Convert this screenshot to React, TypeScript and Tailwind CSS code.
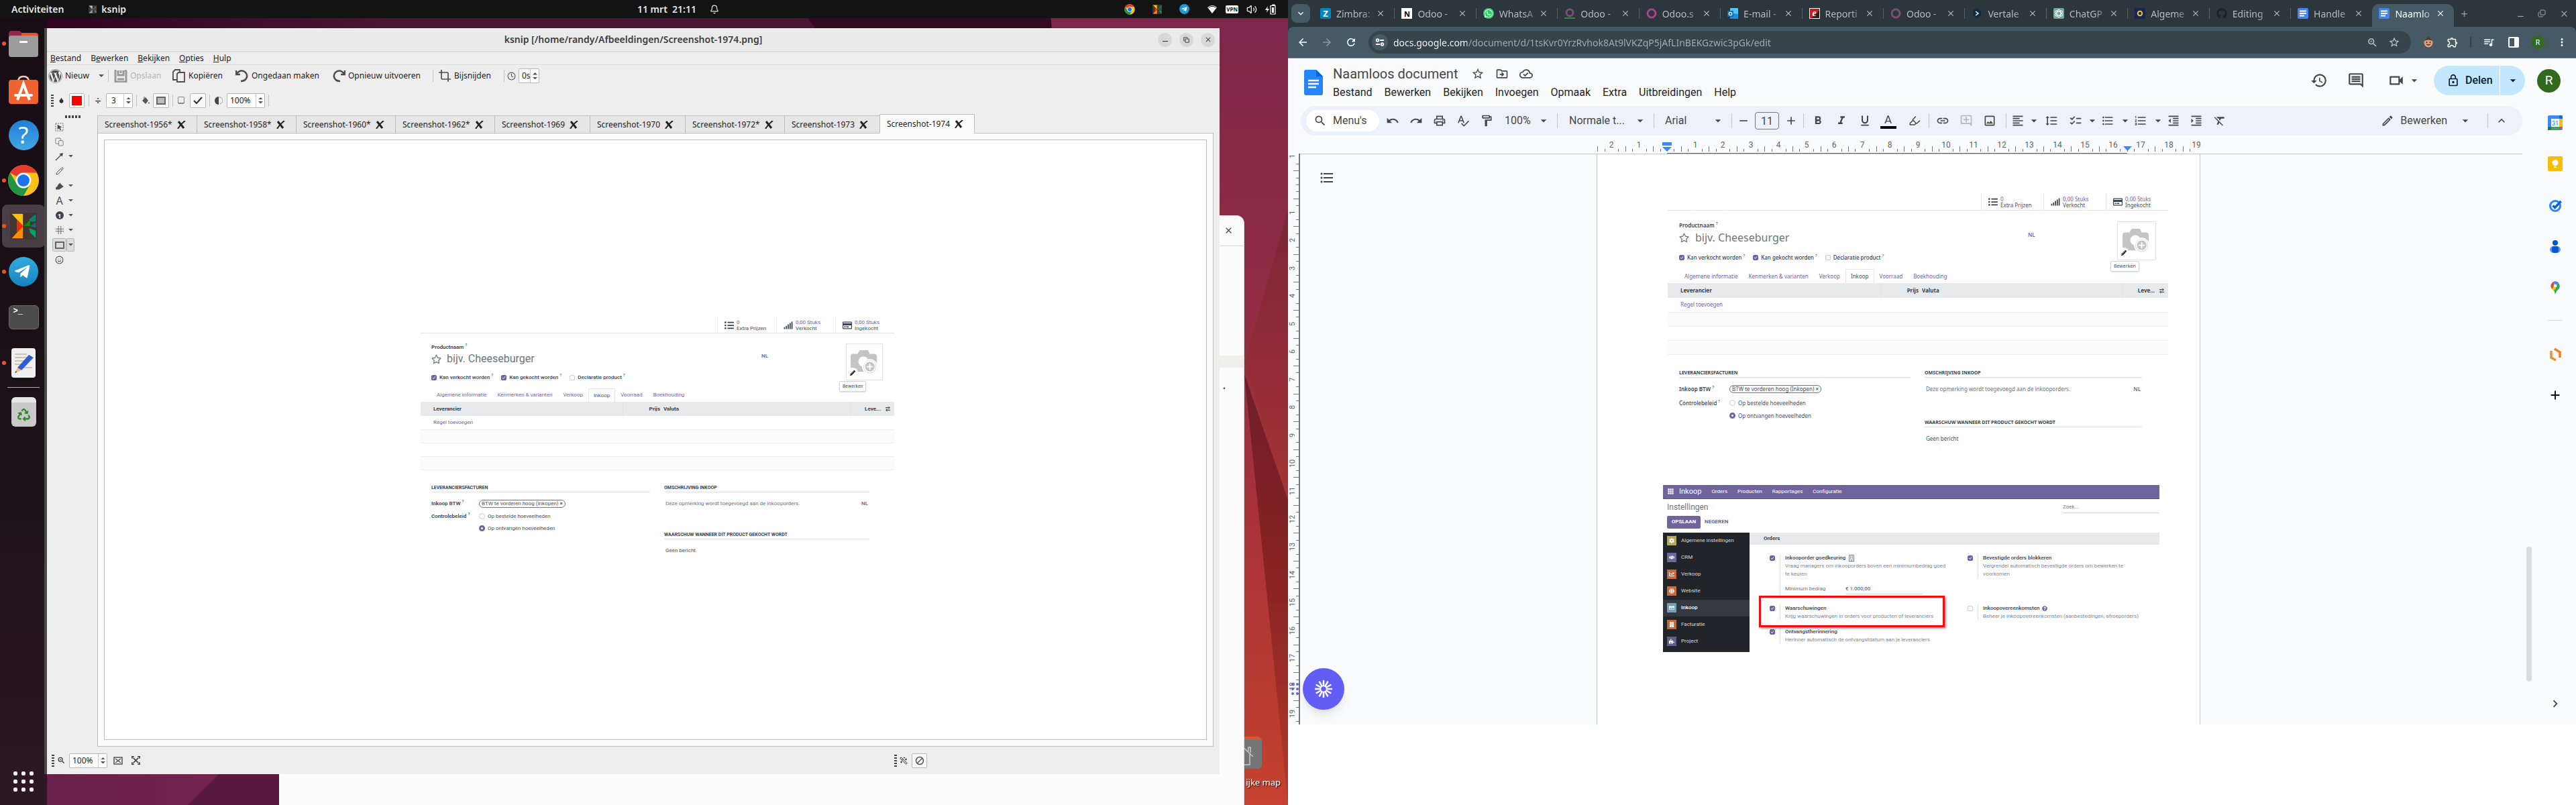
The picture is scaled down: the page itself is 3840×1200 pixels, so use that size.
import type { ReactNode } from "react";
import {
  MdAdd, MdArrowBack, MdArrowDropDown, MdArrowForward, MdChecklist, MdChevronRight, MdClose, MdExpandMore,
  MdFormatAlignLeft, MdFormatBold, MdFormatClear, MdFormatIndentDecrease, MdFormatIndentIncrease, MdFormatItalic,
  MdFormatLineSpacing, MdFormatListBulleted, MdFormatListNumbered, MdFormatUnderlined, MdHistory, MdKeyboardArrowUp,
  MdLink, MdMoreVert, MdOutlineAddComment, MdOutlineCloudDone, MdOutlineComment, MdOutlineDriveFileMove, MdOutlineEdit,
  MdOutlineExtension, MdOutlineFormatPaint, MdOutlineImage, MdOutlineLock, MdOutlinePrint, MdOutlineVideocam,
  MdQueueMusic, MdRedo, MdRefresh, MdRemove, MdSearch, MdSpellcheck, MdStarBorder, MdUndo, MdZoomIn,
} from "react-icons/md";
import {
  FaBuilding, FaChartLine, FaCog, FaGithub, FaGlobe, FaHandshake, FaListUl, FaPencilAlt, FaPuzzlePiece,
  FaQuestionCircle, FaRecycle, FaRegBuilding, FaRegCreditCard, FaRegStar, FaSignal, FaTelegramPlane, FaWhatsapp, FaWordpress,
} from "react-icons/fa";
import {
  Bell, Clock, Copy, Crop, Droplet, Highlighter, Pencil, Smile, Volume2, WandSparkles,
} from "lucide-react";

/* ---------- shared pieces ---------- */

function ChromeLogo({ className }: { className: string }) {
  return (
    <svg viewBox="0 0 48 48" className={className}>
      <circle cx="24" cy="24" r="23" fill="#fbc116" />
      <path d="M24 24 L4.1 12.5 A23 23 0 0 1 43.9 12.5 L24 12.5Z" fill="#e33b2e" />
      <path d="M4.1 12.5 A23 23 0 0 0 24 47 L34 29.7 L24 24 L14 29.7Z" fill="#229342" />
      <circle cx="24" cy="24" r="11.5" fill="#fff" />
      <circle cx="24" cy="24" r="9" fill="#1a73e8" />
    </svg>
  );
}

function KsnipLogo({ className }: { className: string }) {
  return (
    <svg viewBox="0 0 48 48" className={className} preserveAspectRatio="none">
      <rect width="48" height="48" fill="#433331" />
      <path d="M3 2H23V24Z" fill="#ffc107" />
      <path d="M3 46H23V24Z" fill="#ff8f00" />
      <path d="M12 12L24 24L12 36Z" fill="#ef2b0c" />
      <path d="M24 24L36 13V24Z" fill="#0a8a0a" />
      <path d="M34 12L46 3V16H36Z" fill="#0b8072" />
      <path d="M36 24L46 18V27Z" fill="#1d6a78" />
      <path d="M34 28L46 32V46L36 36Z" fill="#00a06a" />
    </svg>
  );
}

function Tick({ label, checked, id, className }: { label: string; checked?: boolean; id: string; className?: string }) {
  return (
    <span className={`relative inline-grid size-2 shrink-0 ${className ?? ""}`}>
      <input
        id={id} type="checkbox" defaultChecked={checked} aria-label={label}
        className="peer col-start-1 row-start-1 size-2 appearance-none rounded-xs border border-[#c9ccd2] bg-white checked:border-[#71639e] checked:bg-[#71639e]"
      />
      <svg viewBox="0 0 8 8" className="pointer-events-none col-start-1 row-start-1 hidden size-2 peer-checked:block">
        <path d="M2 4L3.5 5.5L6 2.5" fill="none" stroke="#fff" strokeWidth="1" />
      </svg>
    </span>
  );
}

const Help = () => <sup className="relative -top-1 pl-0.5 text-[6px] leading-none text-[#017e84]">?</sup>;

/* ---------- product form ---------- */

function ProductForm({ large }: { large?: boolean }) {
  const p = large ? "doc" : "shot";
  return (
    <div className={large ? "w-[746px] font-['Noto_Sans',sans-serif] text-[8px] leading-[10px] text-[#495057]" : "w-[706px] font-[Roboto,sans-serif] text-[8px] leading-[10px] text-[#495057]"}>
      <div className={large ? "flex h-[26px] justify-end border-b border-[#dee2e6]" : "flex h-6 justify-end border-b border-[#dee2e6]"}>
        {[
          { icon: <FaListUl />, n: "0", t: "Extra Prijzen" },
          { icon: <FaSignal />, n: "0,00 Stuks", t: "Verkocht" },
          { icon: <FaRegCreditCard />, n: "0,00 Stuks", t: "Ingekocht" },
        ].map((s) => (
          <button key={s.t} className={large ? "flex w-[93px] items-center gap-1 border-l border-[#e7e9ed] pl-[10px] text-left" : "flex w-[88px] items-center gap-1 border-l border-[#e7e9ed] pl-[10px] text-left"}>
            <span className="text-[14px] text-[#374151]">{s.icon}</span>
            <span className="block leading-[9px]"><span className="block text-[#71639e]">{s.n}</span>{s.t}</span>
          </button>
        ))}
      </div>

      <div className={large ? "relative px-[17px] pt-[17px]" : "relative px-4 pt-4"}>
        <label htmlFor={`${p}-name`} className="block font-semibold text-[#374151]">Productnaam<Help /></label>
        <div className={large ? "mt-[2px] flex h-[22px] items-center" : "mt-px flex h-[22px] items-center"}>
          <button aria-label="Favoriet" className="text-[15px] text-[#6c757d]"><FaRegStar /></button>
          <input id={`${p}-name`} placeholder="bijv. Cheeseburger" className={large ? "ml-[9px] w-[496px] bg-transparent text-[16px] leading-[22px] placeholder:text-[#6c757d]" : "ml-2 w-[469px] bg-transparent text-[16px] leading-[22px] placeholder:text-[#6c757d]"} />
          <button className="mb-2 font-semibold text-[#71639e]">NL</button>
        </div>
        <div className={large ? "mt-[14px] flex items-center gap-3 font-medium text-[#374151]" : "mt-3 flex items-center gap-3 font-medium text-[#374151]"}>
          {[["Kan verkocht worden", true], ["Kan gekocht worden", true], ["Declaratie product", false]].map(([t, c]) => (
            <label key={t as string} className="flex items-center">
              <Tick id={`${p}-${t}`} label={t as string} checked={c as boolean} />
              <span className="pl-1">{t}<Help /></span>
            </label>
          ))}
        </div>

        <div className={large ? "absolute right-[18px] top-[16px] grid size-[58px] place-items-center border border-[#dee2e6]" : "absolute right-[17px] top-[15px] grid size-[55px] place-items-center border border-[#dee2e6]"}>
          <svg viewBox="0 0 46 42" className="h-[40px] w-[44px]">
            <path d="M5 8H12L15 2H28L31 8H38Q42 8 42 12V32Q42 36 38 36H5Q1 36 1 32V12Q1 8 5 8Z" fill="#c4c4c4" />
            <circle cx="21" cy="20" r="8" fill="#fff" />
            <circle cx="31" cy="28" r="11" fill="#c4c4c4" stroke="#fff" strokeWidth="2" />
            <circle cx="31" cy="28" r="8.5" fill="none" stroke="#fff" strokeWidth="2" />
            <path d="M31 23V33M26 28H36" stroke="#fff" strokeWidth="2" />
          </svg>
          <button aria-label="Foto bewerken" className="absolute bottom-[2px] left-[1px] grid size-4 place-items-center rounded-full bg-white text-[8px] text-[#111]"><FaPencilAlt /></button>
          <span className="absolute -left-[11px] top-full mt-[2px] rounded-xs border border-[#ced4da] bg-white px-1 py-[2px] text-[7px] text-[#495057] shadow-sm">Bewerken</span>
        </div>
      </div>

      <div className={large ? "mt-3 flex h-[21px] px-[17px] text-[#71639e]" : "mt-[11px] flex h-5 px-4 text-[#71639e]"}>
        {["Algemene informatie", "Kenmerken & varianten", "Verkoop", "Inkoop", "Voorraad", "Boekhouding"].map((t) => (
          <button key={t} className={t === "Inkoop" ? "border border-b-0 border-[#e3e6ea] bg-white px-[7px] text-[#495057]" : "px-2"}>{t}</button>
        ))}
      </div>

      <table className="w-full table-fixed border-b border-[#dee2e6]">
        <colgroup>
          <col className={large ? "w-[318px]" : "w-[301px]"} /><col className="w-[56px]" /><col />
          <col className={large ? "w-[48px]" : "w-[46px]"} /><col className="w-[20px]" />
        </colgroup>
        <thead>
          <tr className={large ? "h-[22px] bg-[#e7eaed] text-[#374151]" : "h-[21px] bg-[#e7eaed] text-[#374151]"}>
            <th className="border-r border-[#dde1e5] pl-[19px] text-left font-bold">Leverancier</th>
            <th className="text-right font-bold">Prijs</th>
            <th className="border-r border-[#dde1e5] pl-[5px] text-left font-bold">Valuta</th>
            <th className="text-right font-bold">Leve...</th>
            <th aria-label="Kolommen">
              <svg viewBox="0 0 10 10" className="mx-auto size-[9px]"><path d="M1 3H6M4 7H9" stroke="#495057" strokeWidth="1.4" /><path d="M6 0.5L9 3L6 5.500ZM4 4.500L1 7L4 9.500Z" fill="#495057" /></svg>
            </th>
          </tr>
        </thead>
        <tbody>
          {[0, 1, 2, 3].map((i) => (
            <tr key={i} className={`${large ? "h-[21px]" : "h-5"} ${i % 2 ? "border-y border-[#eceef0] bg-[#fbfbfb]" : ""}`}>
              <td colSpan={5} className="pl-[19px] text-[#71639e]">{i === 0 && <button>Regel toevoegen</button>}</td>
            </tr>
          ))}
        </tbody>
      </table>

      <div className={large ? "mt-[22px] flex gap-[21px] pl-[17px] pr-[39px]" : "mt-[21px] flex gap-[21px] pl-4 pr-[37px]"}>
        <div className={large ? "w-[345px]" : "w-[326px]"}>
          <h4 className="border-b border-[#dee2e6] pb-px text-[7px] font-bold text-[#374151]">LEVERANCIERSFACTUREN</h4>
          <div className="mt-[11px] flex h-3 items-center">
            <span className={large ? "w-[75px] font-semibold text-[#374151]" : "w-[71px] font-semibold text-[#374151]"}>Inkoop BTW<Help /></span>
            <span className="flex h-3 items-center gap-[2px] rounded-full border border-[#6c757d] px-[3px] leading-none">BTW te vorderen hoog (Inkopen)<button aria-label="Verwijderen" className="font-bold">×</button></span>
          </div>
          <div role="radiogroup" aria-label="Controlebeleid" className={large ? "mt-[10px] flex" : "mt-[8px] flex"}>
            <span className={large ? "w-[75px] whitespace-nowrap font-medium text-[#374151]" : "w-[71px] whitespace-nowrap font-semibold text-[#374151]"}>Controlebeleid<Help /></span>
            <span className={large ? "flex flex-col gap-[9px]" : "flex flex-col gap-2"}>
              {["Op bestelde hoeveelheden", "Op ontvangen hoeveelheden"].map((t, i) => (
                <label key={t} className="flex items-center gap-1">
                  <input type="radio" name={`${p}-policy`} defaultChecked={i === 1} className="size-[9px] appearance-none rounded-full border border-[#c9ccd2] checked:border-[3px] checked:border-[#71639e]" />
                  {t}
                </label>
              ))}
            </span>
          </div>
        </div>
        <div className="flex-1">
          <h4 className="border-b border-[#dee2e6] pb-px text-[7px] font-bold text-[#374151]">OMSCHRIJVING INKOOP</h4>
          <div className="mt-[11px] flex h-3 items-center justify-between px-[2px]">
            <input aria-label="Omschrijving inkoop" placeholder="Deze opmerking wordt toegevoegd aan de inkooporders." className="w-[240px] placeholder:text-[#6c757d]" />
            <button className="font-semibold text-[#71639e]">NL</button>
          </div>
          <h4 className={large ? "mt-[39px] border-b border-[#dee2e6] pb-px text-[7px] font-bold text-[#374151]" : "mt-[35px] border-b border-[#dee2e6] pb-px text-[7px] font-bold text-[#374151]"}>WAARSCHUW WANNEER DIT PRODUCT GEKOCHT WORDT</h4>
          <select aria-label="Waarschuwing" className="mt-3 block appearance-none px-[2px]"><option>Geen bericht</option></select>
        </div>
      </div>
    </div>
  );
}

/* ---------- settings page ---------- */

function Setting({ title, desc, checked, badge, children, className }: { title: string; desc: string; checked?: boolean; badge?: ReactNode; children?: ReactNode; className?: string }) {
  return (
    <div className={`flex ${className ?? ""}`}>
      <Tick id={`set-${title}`} label={title} checked={checked} className="mt-[2px]" />
      <div className="ml-[7px] border-l border-[#dee2e6] pl-[7px]">
        <label htmlFor={`set-${title}`} className="flex h-3 items-center gap-1 font-semibold text-[#495057]">{title}{badge}</label>
        <p className="w-[243px] leading-3 text-[#808890]">{desc}</p>
        {children}
      </div>
    </div>
  );
}

function SettingsPage() {
  const apps: [string, string, ReactNode][] = [
    ["Algemene instellingen", "bg-[#b5a95a]", <FaCog />], ["CRM", "bg-[#6a6a9c]", <FaHandshake />], ["Verkoop", "bg-[#c9683c]", <FaChartLine />],
    ["Website", "bg-[#c96a3e]", <FaGlobe />], ["Inkoop", "bg-[#72a0b5]", <FaRegCreditCard />], ["Facturatie", "bg-[#c06a3c]", <FaBuilding />],
    ["Project", "bg-[#5f5f8c]", <FaPuzzlePiece />],
  ];
  return (
    <div className="w-[740px] font-[Roboto,sans-serif] text-[8px] leading-[10px]">
      <nav className="flex h-[21px] items-center gap-[15px] border-b border-[#5c4f87] bg-[#71639e] pl-[7px] text-white">
        <a href="#apps" className="flex items-center gap-2 text-[11px]">
          <svg viewBox="0 0 9 9" className="size-[9px]" fill="#fff">
            {[0, 3, 6].map((y) => [0, 3, 6].map((x) => <rect key={`${x}${y}`} x={x + 0.3} y={y + 0.3} width="2.3" height="2.3" />))}
          </svg>Inkoop
        </a>
        {["Orders", "Producten", "Rapportages", "Configuratie"].map((t) => <a key={t} href="#menu">{t}</a>)}
      </nav>
      <div className="flex h-[25px] items-center justify-between pl-[6px]">
        <h3 className="text-[12px] text-[#6c757d]">Instellingen</h3>
        <input aria-label="Zoek" placeholder="Zoek..." className="h-[18px] w-[144px] border-b border-[#ced4da] placeholder:text-[#6c757d]" />
      </div>
      <div className="flex gap-[6px] pb-[6px] pl-[6px] font-bold">
        <button className="h-[19px] w-[50px] rounded-xs bg-[#71639e] text-white">OPSLAAN</button>
        <button className="text-[#71639e]">NEGEREN</button>
      </div>
      <div className="flex h-[178px]">
        <ul className="w-[129px] bg-[#212529] text-[#d5d8dc]">
          {apps.map(([t, c, icon]) => (
            <li key={t}>
              <a href="#app" className={`flex h-[25px] items-center gap-[7px] pl-[6px] ${t === "Inkoop" ? "bg-[#34393f] font-medium text-white" : ""}`}>
                <span className={`grid size-[14px] place-items-center text-white ${c}`}>{icon}</span>{t}
              </a>
            </li>
          ))}
        </ul>
        <div className="relative flex-1">
          <h4 className="h-[18px] bg-[#e7eaed] pl-[21px] font-bold leading-[18px] text-[#374151]">Orders</h4>
          <div className="flex gap-[29px] pl-[30px] pt-[14px]">
            <div>
              <Setting title="Inkooporder goedkeuring" desc="Vraag managers om inkooporders boven een minimumbedrag goed te keuren" checked className="h-[63px]" badge={<FaRegBuilding className="text-[10px] text-[#6c757d]" />}>
                <label className="mt-[10px] flex h-3 items-center text-[#6c757d]"><span className="w-[90px]">Minimum bedrag</span>
                  <input defaultValue="€ 1.000,00" className="h-4 w-[116px] border-b border-[#ced4da] text-[#495057]" /></label>
              </Setting>
              <Setting title="Waarschuwingen" desc="Krijg waarschuwingen in orders voor producten of leveranciers" checked className="mt-3 h-6" />
              <Setting title="Ontvangstherinnering" desc="Herinner automatisch de ontvangstdatum aan je leveranciers" checked className="mt-[11px] h-6" />
            </div>
            <div>
              <Setting title="Bevestigde orders blokkeren" desc="Vergrendel automatisch bevestigde orders om bewerken te voorkomen" checked className="h-9" />
              <Setting title="Inkoopovereenkomsten" desc="Beheer je inkoopovereenkomsten (aanbestedingen, afroeporders)" className="mt-[39px] h-6" badge={<FaQuestionCircle className="text-[#71639e]" />} />
            </div>
          </div>
          <div className="pointer-events-none absolute left-[14px] top-[94px] h-[47px] w-[277px] border-[3px] border-[#f40d0d] shadow-[2px_2px_3px_rgba(0,0,0,0.4)]" />
        </div>
      </div>
    </div>
  );
}

/* ---------- left desktop ---------- */

function Wallpaper() {
  return (
    <svg viewBox="0 0 1920 1200" preserveAspectRatio="none" className="absolute inset-0 size-full">
      <defs>
        <linearGradient id="wpTop" x1="0" x2="1"><stop offset="0" stopColor="#30001f" /><stop offset="0.3" stopColor="#4b1433" /><stop offset="1" stopColor="#4b1433" /></linearGradient>
        <linearGradient id="wpRight" x1="0" y1="0" x2="0" y2="1"><stop offset="0" stopColor="#7b264a" /><stop offset="0.4" stopColor="#922c42" /><stop offset="0.75" stopColor="#b03634" /><stop offset="1" stopColor="#c4422e" /></linearGradient>
        <linearGradient id="wpFold" x1="0" y1="0" x2="0" y2="1"><stop offset="0" stopColor="#7d2438" /><stop offset="1" stopColor="#a43334" /></linearGradient>
        <linearGradient id="wpShade" x1="0" y1="0" x2="0" y2="1"><stop offset="0" stopColor="#6f1d28" /><stop offset="0.5" stopColor="#8a2422" /><stop offset="1" stopColor="#b53a2b" /></linearGradient>
        <linearGradient id="wpLow" x1="0" x2="1"><stop offset="0" stopColor="#64204a" /><stop offset="1" stopColor="#8a2857" /></linearGradient>
      </defs>
      <rect width="1920" height="1200" fill="url(#wpTop)" />
      <path d="M1185 0H1565L1620 200H1330Z" fill="#330a20" />
      <path d="M1565 0H1920V1200H1640Z" fill="url(#wpRight)" />
      <path d="M1920 313L1855 540L1920 745Z" fill="url(#wpFold)" />
      <path d="M1855 558L1920 745V1200L1890 900Z" fill="url(#wpShade)" />
      <rect y="1100" width="700" height="100" fill="url(#wpLow)" />
      <path d="M280 1200L330 1150H416V1200Z" fill="#5a1a40" />
    </svg>
  );
}

function DockItem({ label, running, active, children }: { label: string; running?: boolean; active?: boolean; children: ReactNode }) {
  return (
    <button aria-label={label} className={`relative grid h-16 w-16 shrink-0 place-items-center rounded-lg ${active ? "bg-[#4a3d46]" : ""}`}>
      {running && <span className="absolute left-0 top-1/2 size-[6px] -translate-y-1/2 rounded-full bg-[#e95420]" />}
      {children}
    </button>
  );
}

function Dock() {
  return (
    <nav className="relative flex w-[70px] shrink-0 flex-col items-center gap-1 bg-linear-to-b from-[#190d15] via-[#1c1018] to-[#2c1822] pb-3 pt-[6px]">
      <DockItem label="Bestanden" running>
        <svg viewBox="0 0 46 42" className="w-[46px]">
          <path d="M1 6Q1 2 5 2H17L21 5H41Q45 5 45 9V30H1Z" fill="#8c2a50" /><path d="M20 5H41Q45 5 45 9V20H20Z" fill="#e4532b" />
          <rect x="1" y="9" width="44" height="32" rx="4" fill="#9b9b9b" /><rect x="17" y="17" width="12" height="3" rx="1" fill="#fff" />
        </svg>
      </DockItem>
      <DockItem label="Software">
        <svg viewBox="0 0 46 46" className="w-[46px]">
          <path d="M15 12Q15 4 23 4Q31 4 31 12" fill="none" stroke="#f5c9a6" strokeWidth="2.5" /><rect x="1" y="9" width="44" height="36" rx="4" fill="#ef6330" />
          <path d="M14 39L23 15L32 39" fill="none" stroke="#fff" strokeWidth="4" /><rect x="9" y="30" width="28" height="4" rx="2" fill="#fff" />
        </svg>
      </DockItem>
      <DockItem label="Help"><span className="grid size-[45px] place-items-center rounded-full bg-linear-to-b from-[#1c7fd6] to-[#44a5e4] font-['Noto_Sans',sans-serif] text-[34px] leading-none text-white">?</span></DockItem>
      <DockItem label="Chrome" running><ChromeLogo className="size-12" /></DockItem>
      <DockItem label="ksnip" running active><KsnipLogo className="h-10 w-10" /></DockItem>
      <DockItem label="Telegram" running><span className="grid size-11 place-items-center rounded-full bg-linear-to-b from-[#33abe0] to-[#1483bd] pr-1 text-[26px] text-white"><FaTelegramPlane /></span></DockItem>
      <DockItem label="Terminal"><span className="h-9 w-[45px] rounded-md border border-[#6a6a6a] bg-[#4b4b4b] pl-[6px] text-left font-['Liberation_Mono',monospace] text-[12px] font-bold leading-4 text-white">&gt;_</span></DockItem>
      <DockItem label="Teksteditor" running>
        <svg viewBox="0 0 38 46" className="w-[38px]">
          <rect x="1" y="1" width="36" height="44" rx="4" fill="#efefef" />
          <path d="M6 10H24M6 15H26M6 20H22M6 25H18M14 30H32" stroke="#bdb8a8" strokeWidth="1.5" />
          <path d="M10 30L27 11L34 15L16 34Z" fill="#2d5fd0" /><path d="M10 30L16 34L6 38Z" fill="#f0b98a" /><path d="M6 38L8 35L9 37Z" fill="#333" />
        </svg>
      </DockItem>
      <span className="h-px w-12 bg-[#b6aeb3]" />
      <DockItem label="Prullenbak"><span className="grid h-[44px] w-[37px] place-items-center rounded-md border-t-8 border-[#e6e6e6] bg-[#c9c9c9] text-[19px] text-[#2c8a2c]"><FaRecycle /></span></DockItem>
      <button aria-label="Toepassingen" className="mt-auto grid grid-cols-3 gap-[6px] pb-2">
        {Array.from({ length: 9 }, (_, i) => <span key={i} className="size-[6px] rounded-[2px] bg-[#f2eef0]" />)}
      </button>
    </nav>
  );
}

function TopBar() {
  return (
    <header className="relative grid h-[27px] shrink-0 grid-cols-3 items-center bg-[#131313] px-[17px] font-['Noto_Sans',sans-serif] text-[14px] font-semibold text-[#e8e8e8]">
      <div className="flex items-center gap-[37px]">
        <button>Activiteiten</button>
        <button className="flex items-center gap-[7px]"><KsnipLogo className="size-3 grayscale" />ksnip</button>
      </div>
      <div className="flex items-center justify-center gap-5 pl-[102px]"><button>11 mrt&nbsp; 21:11</button><Bell className="size-[14px]" /></div>
      <div className="flex items-center justify-end gap-[26px]">
        <ChromeLogo className="size-4" />
        <KsnipLogo className="size-[14px]" />
        <span className="grid size-[15px] place-items-center rounded-full bg-[#2697d3] text-[9px] text-white"><FaTelegramPlane /></span>
        <div className="flex items-center gap-3">
          <svg viewBox="0 0 16 14" className="w-4" fill="#fff"><path d="M8 13L1 4Q8 -2 15 4Z" /><path d="M2.5 4.5Q8 0 13.5 4.5" fill="none" stroke="#131313" strokeWidth="1" /></svg>
          <span className="rounded-xs bg-white px-px text-[8px] font-bold leading-3 text-[#131313]">VPN</span>
          <Volume2 className="size-4" />
          <svg viewBox="0 0 17 16" className="w-[17px]"><path d="M4 3L0 9H3L2 13L6 7H3Z" fill="#fff" /><path d="M10 2H14V1H11V2M8 2.5H15V15H8Z" fill="none" stroke="#fff" strokeWidth="1.2" /><rect x="10" y="5" width="3" height="8" fill="#fff" /></svg>
        </div>
      </div>
    </header>
  );
}

function Spin({ label, value, className }: { label: string; value: string; className: string }) {
  return (
    <span className={`flex h-[22px] items-stretch rounded-xs border border-[#b9b9b9] bg-white ${className}`}>
      <input aria-label={label} defaultValue={value} className="w-0 min-w-0 flex-1 pl-1" />
      <span className="flex w-[13px] flex-col items-center justify-center gap-[3px] border-l border-[#ccc]">
        <svg viewBox="0 0 8 4" className="w-[7px]"><path d="M0 4L4 0L8 4Z" fill="#555" /></svg>
        <svg viewBox="0 0 8 4" className="w-[7px]"><path d="M0 0L4 4L8 0Z" fill="#555" /></svg>
      </span>
    </span>
  );
}

const Caret = ({ className = "w-2" }: { className?: string }) => <svg viewBox="0 0 8 4" className={className}><path d="M0 0H8L4 4Z" fill="#555" /></svg>;
const VSep = ({ className = "" }: { className?: string }) => <span className={`h-[18px] w-px bg-[#c4c4c4] ${className}`} />;
const Grip = () => <span className="flex flex-col gap-[2px]">{[0, 1, 2, 3, 4].map((i) => <span key={i} className="h-[2px] w-1 bg-[#444]" />)}</span>;

function ToolButton({ icon, text, className = "" }: { icon: ReactNode; text: string; className?: string }) {
  return <button className={`flex items-center gap-1 ${className}`}><span className="text-[#4d4d4d]">{icon}</span>{text}</button>;
}

function KsnipWindow() {
  const tabs = ["1956*", "1958*", "1960*", "1962*", "1969", "1970", "1972*", "1973", "1974"];
  const tools: [string, ReactNode, boolean][] = [
    ["Selecteren", <svg viewBox="0 0 14 14" className="size-[13px]"><rect x="1" y="1" width="12" height="12" fill="none" stroke="#555" strokeDasharray="2 1.5" /><path d="M4 3L11 7L8 8L10 11L8.5 12L6.5 9L4 11Z" fill="#444" /></svg>, false],
    ["Dupliceren", <svg viewBox="0 0 14 14" className="size-[13px]" fill="#eee" stroke="#777"><rect x="1" y="1" width="8" height="9" rx="1" /><rect x="6" y="5" width="7" height="8" rx="1" /></svg>, false],
    ["Pijl", <svg viewBox="0 0 14 14" className="size-[13px]"><path d="M1 13L10 4" stroke="#555" strokeWidth="1.5" /><path d="M13 1L11.500 7L7 2.500Z" fill="#444" /></svg>, true],
    ["Pen", <Pencil className="size-3" />, false],
    ["Markeerstift", <Highlighter className="size-[13px] fill-[#4d4d4d]" />, true],
    ["Tekst", <span className="text-[16px] leading-none">A</span>, true],
    ["Nummer", <span className="grid size-3 place-items-center rounded-full bg-[#444] text-[9px] font-bold leading-none text-white">1</span>, true],
    ["Vervagen", <svg viewBox="0 0 14 14" className="size-3" stroke="#555" strokeWidth="1.5" strokeDasharray="1.5 1"><path d="M5 0V14M9 0V14M0 5H14M0 9H14" /></svg>, true],
    ["Rechthoek", <span className="block h-[11px] w-[14px] border-2 border-[#666]" />, true],
    ["Sticker", <Smile className="size-[13px]" />, false],
  ];
  return (
    <section className="absolute bottom-[46px] left-[66px] right-[102px] top-[42px] flex flex-col border-l-4 border-[#4a4a4a] bg-[#eeeeee] font-['Noto_Sans',sans-serif] text-[12px] text-[#222]">
      <div className="grid h-9 shrink-0 grid-cols-[1fr_auto_1fr] items-center border-b-2 border-[#d9d9d9] bg-[#ebebeb]">
        <span />
        <h1 className="text-[14px] font-semibold leading-none text-[#3d3d3d]">ksnip [/home/randy/Afbeeldingen/Screenshot-1974.png]</h1>
        <div className="flex justify-end gap-[11px] pr-[7px] text-[#444]">
          <button aria-label="Minimaliseren" className="grid size-[21px] place-items-center rounded-full bg-[#d8d8d8]"><span className="mt-1 h-px w-2 bg-[#333]" /></button>
          <button aria-label="Herstellen" className="grid size-[21px] place-items-center rounded-full bg-[#d8d8d8]"><Copy className="size-[9px]" strokeWidth={3} /></button>
          <button aria-label="Sluiten" className="grid size-[21px] place-items-center rounded-full bg-[#d8d8d8]"><MdClose className="text-[12px]" /></button>
        </div>
      </div>
      <nav className="flex h-[19px] shrink-0 items-center gap-[14px] border-b border-[#dcdcdc] pl-[5px]">
        {[["", "B", "estand"], ["B", "e", "werken"], ["", "B", "ekijken"], ["", "O", "pties"], ["", "H", "ulp"]].map((m) => (
          <button key={m.join("")}>{m[0]}<u>{m[1]}</u>{m[2]}</button>
        ))}
      </nav>
      <div className="flex h-[32px] shrink-0 items-center pl-[2px]">
        <ToolButton icon={<FaWordpress className="text-[21px]" />} text="Nieuw" className="w-[75px]" />
        <Caret /><VSep className="ml-[6px] mr-2" />
        <button disabled className="flex w-[87px] items-center gap-1 text-[#b5b5b5]">
          <svg viewBox="0 0 20 20" className="size-5" fill="none" stroke="#999" strokeWidth="3"><path d="M2 1V19H18V3L16 2M6 2V9H14V2M10 2V6M5 15H15" /></svg>Opslaan
        </button>
        <ToolButton icon={<svg viewBox="0 0 20 20" className="size-5" fill="#eee" stroke="#4d4d4d" strokeWidth="1.8"><path d="M4 1H11V16H1V4Z" /><path d="M9 5H18V19H7V7Z" /></svg>} text="Kopiëren" className="w-[94px]" />
        <ToolButton icon={<svg viewBox="0 0 20 20" className="size-5" fill="none" stroke="#4d4d4d" strokeWidth="2.500"><path d="M1 2V8H7M2 7Q6 1 12 3Q18 6 17 12Q15 18 8 18" /></svg>} text="Ongedaan maken" className="w-[144px]" />
        <ToolButton icon={<svg viewBox="0 0 20 20" className="size-5" fill="none" stroke="#4d4d4d" strokeWidth="2.500"><path d="M19 2V8H13M18 7Q14 1 8 3Q2 6 3 12Q5 18 12 18" /></svg>} text="Opnieuw uitvoeren" className="w-[150px]" />
        <VSep className="mr-[7px]" />
        <ToolButton icon={<Crop className="size-5" />} text="Bijsnijden" className="w-[98px]" />
        <VSep className="mr-1" /><Clock className="size-[13px] text-[#555]" />
        <Spin label="Vertraging" value="0s" className="ml-1 w-[31px]" />
      </div>
      <div className="flex h-[41px] shrink-0 items-center pl-[6px]">
        <Grip /><Droplet className="ml-[7px] mr-[7px] size-[9px] fill-[#333]" />
        <button aria-label="Kleur" className="h-[22px] w-[23px] rounded-xs border border-[#b9b9b9] bg-white p-[3px]"><span className="block size-full bg-[#ff0000]" /></button>
        <VSep className="ml-[6px] mr-[7px]" /><span className="w-3 text-center text-[16px] leading-none">÷</span>
        <Spin label="Dikte" value=" 3" className="ml-[6px] w-10" />
        <VSep className="ml-[5px] mr-[7px]" />
        <svg viewBox="0 0 12 12" className="size-3" fill="#555"><path d="M1 6L6 1L10 6L6 11Z" /><path d="M4 0V4" stroke="#555" /><circle cx="11" cy="9.500" r="1" /></svg>
        <button aria-label="Vulling" className="ml-[5px] grid h-[22px] w-6 place-items-center rounded-xs border border-[#b9b9b9] bg-[#f6f6f6]"><span className="h-3 w-[14px] border-2 border-[#666] bg-[#bbb]" /></button>
        <VSep className="ml-[5px] mr-[7px]" /><span className="h-[11px] w-[10px] rounded-xs border border-b-2 border-[#888]" />
        <button aria-label="Schaduw" className="ml-[8px] grid h-[22px] w-6 place-items-center rounded-xs border border-[#b9b9b9] bg-[#f9f9f9]">
          <svg viewBox="0 0 14 12" className="w-[14px]"><path d="M1 6L5 10L13 1" fill="none" stroke="#333" strokeWidth="2.200" /></svg>
        </button>
        <VSep className="ml-[5px] mr-[7px]" />
        <svg viewBox="0 0 12 12" className="size-3"><path d="M6 0A6 6 0 0 0 6 12Z" fill="#444" /><path d="M7 1A5 5 0 0 1 7 11" fill="none" stroke="#777" strokeDasharray="2 1" /></svg>
        <Spin label="Dekking" value="100%" className="ml-[6px] w-[57px]" />
        <VSep className="ml-[5px]" />
      </div>
      <div className="flex min-h-0 flex-1">
        <div className="flex w-[75px] shrink-0 flex-col gap-px pl-2 pt-[2px]">
          <span className="ml-[19px] flex gap-[2px]">{[0, 1, 2, 3, 4].map((i) => <span key={i} className="h-1 w-[3px] bg-[#444]" />)}</span>
          <div className="mt-px flex flex-col">
            {tools.map(([label, icon, more], i) => (
              <div key={label} className="flex h-[22px] items-center text-[#4d4d4d]">
                <button aria-label={label} className={`grid h-5 w-[21px] place-items-center ${i === 8 ? "rounded-xs border border-[#b9b9b9] bg-[#dcdcdc]" : ""}`}>{icon}</button>
                {more && <button aria-label={`${label}: meer`} className={`grid h-5 w-3 place-items-center ${i === 8 ? "rounded-xs border border-[#b9b9b9] bg-[#dcdcdc]" : ""}`}><Caret className="w-[7px]" /></button>}
              </div>
            ))}
          </div>
        </div>
        <div className="flex min-w-0 flex-1 flex-col pr-[9px]">
          <div className="relative -mb-px flex h-[29px] items-end">
            {tabs.map((t, i) => (
              <div key={t} className={`flex items-center border border-[#bdbdbd] pl-[10px] ${t.endsWith("*") ? "w-[148px]" : "w-[142px]"} ${i === 8 ? "h-[29px] border-b-[#fcfcfc] bg-[#fcfcfc]" : "h-[27px] border-r-0 bg-[#e6e6e6]"}`}>
                <button>Screenshot-{t}</button>
                <button aria-label="Tab sluiten" className="ml-[7px]">
                  <svg viewBox="0 0 13 12" className="w-[13px]" fill="none" stroke="#222"><path d="M2 1L10 11" strokeWidth="3" /><path d="M12 0Q5 5 1 12" strokeWidth="2" /></svg>
                </button>
              </div>
            ))}
          </div>
          <div className="flex flex-1 flex-col border border-[#bdbdbd] bg-[#fcfcfc] p-[9px]">
            <div className="flex-1 border border-[#bdbdbd] bg-white pl-[6px] pt-[264px]"><div className="flex justify-center"><ProductForm /></div></div>
          </div>
        </div>
      </div>
      <footer className="flex h-[41px] shrink-0 items-center pl-[7px]">
        <Grip /><MdZoomIn className="ml-[4px] text-[13px]" />
        <Spin label="Zoom" value="100%" className="ml-[5px] w-[57px]" />
        <svg viewBox="0 0 14 12" className="ml-[9px] w-[14px]" fill="none" stroke="#555" strokeWidth="1.5"><rect x="1" y="1" width="12" height="10" /><path d="M3 3L11 9M11 3L3 9" /></svg>
        <svg viewBox="0 0 14 14" className="ml-[13px] w-[13px]" fill="none" stroke="#444" strokeWidth="1.8"><path d="M1 4L1 1L4 1M10 1H13V4M13 10V13H10M4 13H1V10M3 3L11 11M11 3L3 11" /></svg>
        <span className="ml-auto"><Grip /></span>
        <WandSparkles className="ml-1 mr-[6px] size-3 -scale-x-100" />
        <button aria-label="Effecten" className="mr-[436px] grid h-[22px] w-[23px] place-items-center rounded-xs border border-[#b9b9b9] bg-[#f9f9f9]">
          <svg viewBox="0 0 14 14" className="size-[14px]" fill="none" stroke="#555" strokeWidth="1.5"><circle cx="7" cy="7" r="5.5" /><path d="M3 11L11 3" /></svg>
        </button>
      </footer>
    </section>
  );
}

function LeftDesktop() {
  return (
    <div className="relative flex min-w-0 flex-col overflow-hidden">
      <Wallpaper />
      <TopBar />
      <div className="relative flex min-h-0 flex-1"><Dock /></div>
      <div className="absolute bottom-[54px] right-[39px] h-12 w-[60px] rounded-md border-t-4 border-[#e0562a] bg-[#767676]">
        <svg viewBox="0 0 60 44" className="size-full" fill="none" stroke="#c9c9c9" strokeWidth="1.5"><path d="M12 26L30 10L47 26M42 21V38H30V28H22V38H18V22M40 18V12H43V20" /></svg>
      </div>
      <span className="absolute bottom-[24px] right-[11px] font-['Noto_Sans',sans-serif] text-[13px] text-white [text-shadow:1px_1px_1px_#000]">ijke map</span>
      <section className="absolute bottom-0 left-[416px] right-[65px] top-[321px] rounded-t-xl border-r border-[#d8d8d8] bg-[#fcfcfc]">
        <div className="flex h-[46px] items-center justify-end border-b border-[#d4d4d4] pr-[15px] text-[#444]"><button aria-label="Sluiten"><MdClose className="text-[15px]" /></button></div>
        <div className="mt-[163px] h-[18px] bg-[#efefee]" />
        <p className="mt-[16px] pr-[27px] text-right text-[14px] font-bold text-[#444]">.</p>
      </section>
      <KsnipWindow />
    </div>
  );
}

/* ---------- browser ---------- */

const DocFav = () => <svg viewBox="0 0 16 16" className="size-4"><rect x="0" width="16" height="16" rx="2" fill="#4285f4" /><path d="M3 4.5H13M3 8H13M3 11.5H10" stroke="#fff" strokeWidth="1.8" /></svg>;
const Ring = ({ c }: { c: string }) => <svg viewBox="0 0 16 16" className="size-4"><circle cx="8" cy="8" r="6" fill="none" stroke={c} strokeWidth="3" /></svg>;

const browserTabs: [string, ReactNode][] = [
  ["Zimbra:", <span className="grid size-4 place-items-center rounded-xs bg-[#0087c3] text-[13px] font-bold leading-none text-white">Z</span>],
  ["Odoo -", <span className="grid size-4 place-items-center bg-white text-[11px] font-bold leading-none text-black">N</span>],
  ["WhatsA", <span className="grid size-4 place-items-center rounded-full bg-[#25d366] text-[14px] text-white"><FaWhatsapp /></span>],
  ["Odoo -", <svg viewBox="0 0 16 16" className="size-4"><circle cx="8" cy="7" r="5" fill="none" stroke="#7b4f75" strokeWidth="3" /><rect y="14" width="16" height="2" fill="#2e8b3d" /></svg>],
  ["Odoo.s", <Ring c="#a24689" />],
  ["E-mail -", <svg viewBox="0 0 16 16" className="size-4"><rect x="4" width="12" height="14" rx="1" fill="#50c8f5" /><path d="M4 7L16 9V16H4Z" fill="#1a8fe0" /><rect y="4" width="9" height="9" rx="1" fill="#0f6cbd" /><circle cx="4.5" cy="8.5" r="2.2" fill="none" stroke="#fff" strokeWidth="1.3" /></svg>],
  ["Reporti", <span className="grid size-4 place-items-center border border-white bg-[linear-gradient(135deg,#c61a22_60%,#222_60%)] font-['Liberation_Serif',serif] text-[14px] font-bold italic leading-none text-white">e</span>],
  ["Odoo -", <Ring c="#7b4f75" />],
  ["Vertale", <svg viewBox="0 0 16 16" className="size-4"><path d="M8 0L14 4V11L8 16L2 11V4Z" fill="#0f2b46" /><path d="M6 5L10 8L6 11" fill="none" stroke="#fff" strokeWidth="1.5" /></svg>],
  ["ChatGP", <svg viewBox="0 0 16 16" className="size-4"><rect width="16" height="16" rx="2" fill="#74aa9c" /><g fill="none" stroke="#fff" strokeWidth="1"><ellipse cx="8" cy="8" rx="3" ry="6" /><ellipse cx="8" cy="8" rx="3" ry="6" transform="rotate(60 8 8)" /><ellipse cx="8" cy="8" rx="3" ry="6" transform="rotate(120 8 8)" /></g></svg>],
  ["Algeme", <svg viewBox="0 0 16 16" className="size-4"><rect width="16" height="16" fill="#14275a" /><circle cx="8" cy="8" r="3.2" fill="none" stroke="#f7c325" strokeWidth="2" /></svg>],
  ["Editing", <FaGithub className="size-4 text-[#1b2327]" />],
  ["Handle", <DocFav />],
  ["Naamlo", <DocFav />],
];

function BrowserChrome() {
  return (
    <header className="shrink-0 bg-[#2c363c] font-['Noto_Sans',sans-serif] text-[14px] text-[#b4bcc0]">
      <div className="flex h-10 items-end">
        <button aria-label="Tabs zoeken" className="mx-[5px] mb-[6px] grid size-7 shrink-0 place-items-center rounded-lg bg-[#455a64] text-[16px] text-white"><MdExpandMore /></button>
        <div className="flex h-full min-w-0 flex-1">
          {browserTabs.map(([t, icon], i) => {
            const active = i === browserTabs.length - 1;
            return (
              <div key={i} className={`flex min-w-0 flex-1 items-center pl-[10px] ${active ? "mt-[6px] rounded-t-[10px] bg-[#455a64] pb-[6px] text-white" : ""}`}>
                <span className="shrink-0">{icon}</span>
                <button className="ml-2 min-w-0 flex-1 whitespace-nowrap text-left [mask-image:linear-gradient(90deg,#000_70%,rgba(0,0,0,0.2))]">{t}</button>
                <button aria-label="Tab sluiten" className="ml-1 mr-[13px] text-[14px]"><MdClose /></button>
                {i < 12 && <span className="h-4 w-px bg-[#4c6270]" />}
              </div>
            );
          })}
        </div>
        <div className="flex h-full w-[182px] shrink-0 items-center pl-2 text-[15px] text-[#9aa3a8]">
          <button aria-label="Nieuw tabblad"><MdAdd /></button>
          <button aria-label="Minimaliseren" className="ml-auto pt-2"><MdRemove /></button>
          <button aria-label="Herstellen" className="ml-[18px]"><Copy className="size-3 -scale-y-100" /></button>
          <button aria-label="Sluiten" className="ml-5 mr-[10px]"><MdClose /></button>
        </div>
      </div>
      <div className="flex h-[47px] items-center rounded-t-lg border-b border-[#6d7e87] bg-[#455a64] pl-[13px] text-[18px] text-white">
        <button aria-label="Terug"><MdArrowBack /></button>
        <button aria-label="Vooruit" className="ml-[18px] text-[#8c9aa1]"><MdArrowForward /></button>
        <button aria-label="Vernieuwen" className="ml-[18px]"><MdRefresh /></button>
        <div className="ml-[17px] flex h-[34px] flex-1 items-center rounded-full bg-[#38444b] pl-[5px] pr-4 text-[#c2cace]">
          <button aria-label="Sitegegevens" className="grid size-6 place-items-center rounded-full bg-[#455a64]">
            <svg viewBox="0 0 14 14" className="size-[14px]" fill="none" stroke="#fff" strokeWidth="1.8"><circle cx="3.5" cy="4" r="1.8" /><path d="M7 4H13M1 10H7" /><circle cx="10.5" cy="10" r="1.8" /></svg>
          </button>
          <input aria-label="Adres" defaultValue="docs.google.com/document/d/1tsKvr0YrzRvhok8At9lVKZqP5jAfLInBEKGzwic3pGk/edit"
            className="ml-2 flex-1 bg-[linear-gradient(90deg,#fff_110px,#a3afb5_110px)] bg-clip-text text-[14px] text-transparent" />
          <button aria-label="Zoomen" className="text-[17px]"><MdZoomIn /></button>
          <button aria-label="Bladwijzer" className="ml-[15px] text-[18px]"><MdStarBorder /></button>
        </div>
        <svg viewBox="0 0 16 18" className="ml-[18px] w-4"><circle cx="8" cy="10" r="6.5" fill="#e0a27a" /><path d="M2 7L8 0L14 7Q8 4 2 7Z" fill="#5b3522" /><path d="M4 11Q8 17 12 11Q8 13 4 11Z" fill="#5b3522" /><circle cx="5.5" cy="9" r="1" fill="#222" /><circle cx="10.5" cy="9" r="1" fill="#222" /></svg>
        <button aria-label="Extensies" className="ml-[19px]"><MdOutlineExtension /></button>
        <span className="mx-[17px] h-4 w-[2px] bg-[#324047]" />
        <button aria-label="Media"><MdQueueMusic /></button>
        <button aria-label="Zijpaneel" className="ml-5"><svg viewBox="0 0 16 16" className="size-4"><rect x="1" y="1" width="14" height="14" rx="1" fill="none" stroke="#fff" strokeWidth="2" /><rect x="9" y="1" width="6" height="14" fill="#fff" /></svg></button>
        <button aria-label="Profiel" className="ml-[18px] grid size-5 place-items-center rounded-full bg-[#33691e] text-[11px]">R</button>
        <button aria-label="Menu" className="ml-[17px] mr-3"><MdMoreVert /></button>
      </div>
    </header>
  );
}

const Sep = ({ className = "" }: { className?: string }) => <span className={`h-[22px] w-px shrink-0 bg-[#c7c7c7] ${className}`} />;

function Tb({ label, className = "w-[35px]", children }: { label: string; className?: string; children: ReactNode }) {
  return <button aria-label={label} className={`grid h-7 shrink-0 place-items-center text-[20px] ${className}`}>{children}</button>;
}

function Pick({ label, value, className }: { label: string; value: string; className: string }) {
  return (
    <span className={`relative flex shrink-0 items-center ${className}`}>
      <select aria-label={label} defaultValue={value} className="w-full appearance-none bg-transparent"><option>{value}</option></select>
      <MdArrowDropDown className="pointer-events-none absolute right-[10px] text-[20px]" />
    </span>
  );
}

function DocsHeader() {
  return (
    <div className="flex h-[71px] shrink-0 items-start pl-6 pt-[9px]">
      <svg viewBox="0 0 28 38" className="mt-2 w-[28px]"><path d="M3 0H18L28 10V35Q28 38 25 38H3Q0 38 0 35V3Q0 0 3 0Z" fill="#2684fc" /><path d="M18 0L28 10H18Z" fill="#0066da" /><path d="M6 16H22M6 21H22M6 26H18" stroke="#fff" strokeWidth="2.4" /></svg>
      <div className="ml-[15px]">
        <div className="flex h-[27px] items-center text-[20px] text-[#444746]">
          <h2>Naamloos document</h2>
          <button aria-label="Ster" className="ml-5"><MdStarBorder /></button>
          <button aria-label="Verplaatsen" className="ml-4"><MdOutlineDriveFileMove /></button>
          <button aria-label="Opgeslagen" className="ml-4"><MdOutlineCloudDone /></button>
        </div>
        <nav className="mt-[3px] flex gap-[18px] text-[16px] text-[#1f1f1f]">
          {["Bestand", "Bewerken", "Bekijken", "Invoegen", "Opmaak", "Extra", "Uitbreidingen", "Help"].map((m) => <button key={m}>{m}</button>)}
        </nav>
      </div>
      <div className="ml-auto flex h-12 items-center pr-[23px] text-[26px] text-[#444746]">
        <button aria-label="Versies"><MdHistory /></button>
        <button aria-label="Opmerkingen" className="ml-[29px]"><MdOutlineComment /></button>
        <button aria-label="Videogesprek" className="ml-[34px] flex items-center"><MdOutlineVideocam /><MdArrowDropDown className="ml-1 text-[20px]" /></button>
        <div className="ml-[19px] flex h-11 items-center overflow-hidden rounded-full bg-[#c2e7ff] text-[16px] font-medium text-[#001d35]">
          <button className="flex h-full w-[99px] items-center gap-[8px] border-r border-white pl-[19px]"><MdOutlineLock className="text-[20px]" />Delen</button>
          <button aria-label="Deelopties" className="grid h-full w-[37px] place-items-center"><MdArrowDropDown className="text-[20px]" /></button>
        </div>
        <button aria-label="Account" className="ml-[18px] grid size-[35px] place-items-center rounded-full bg-[#33691e] text-[19px] text-white">R</button>
      </div>
    </div>
  );
}

function DocsToolbar() {
  return (
    <div className="ml-[19px] mr-20 flex h-11 shrink-0 items-center rounded-full bg-[#edf2fa] pl-2 pr-[11px] text-[16px] text-[#444746]">
      <button className="mr-[2px] flex h-8 w-[109px] items-center gap-[9px] rounded-full bg-white pl-[11px]"><MdSearch className="text-[20px]" />Menu's</button>
      <Tb label="Ongedaan maken"><MdUndo /></Tb><Tb label="Opnieuw"><MdRedo /></Tb><Tb label="Afdrukken"><MdOutlinePrint /></Tb>
      <Tb label="Spelling"><MdSpellcheck /></Tb><Tb label="Opmaak kopiëren"><MdOutlineFormatPaint /></Tb>
      <Pick label="Zoom" value="100%" className="w-[88px] pl-[10px]" /><Sep />
      <Pick label="Stijl" value="Normale t..." className="w-[143px] pl-[17px]" /><Sep />
      <Pick label="Lettertype" value="Arial" className="w-[115px] pl-4" /><Sep />
      <Tb label="Kleiner" className="w-[34px]"><MdRemove /></Tb>
      <input aria-label="Tekengrootte" defaultValue="11" className="h-[26px] w-9 shrink-0 rounded-sm border border-[#747775] text-center" />
      <Tb label="Groter" className="w-[36px]"><MdAdd /></Tb><Sep className="mr-[3px]" />
      <Tb label="Vet"><MdFormatBold /></Tb><Tb label="Cursief"><MdFormatItalic /></Tb><Tb label="Onderstrepen"><MdFormatUnderlined /></Tb>
      <Tb label="Tekstkleur"><span className="grid w-6 place-items-center border-b-4 border-black pb-px text-[17px] leading-[18px]">A</span></Tb>
      <Tb label="Markeren" className="w-[43px]"><Highlighter className="size-[18px]" /></Tb><Sep className="mr-[2px]" />
      <Tb label="Link"><MdLink /></Tb><Tb label="Opmerking"><MdOutlineAddComment className="text-[#b4b7ba]" /></Tb><Tb label="Afbeelding"><MdOutlineImage /></Tb>
      <Sep className="ml-[7px] mr-[3px]" />
      <Tb label="Uitlijnen" className="w-7"><MdFormatAlignLeft /></Tb><Tb label="Uitlijnopties" className="w-4"><MdArrowDropDown /></Tb>
      <Tb label="Regelafstand" className="w-10"><MdFormatLineSpacing /></Tb>
      <Tb label="Checklist" className="w-[31px]"><MdChecklist /></Tb><Tb label="Checklistopties" className="w-4"><MdArrowDropDown /></Tb>
      <Tb label="Opsomming" className="w-[33px]"><MdFormatListBulleted /></Tb><Tb label="Opsommingsopties" className="w-4"><MdArrowDropDown /></Tb>
      <Tb label="Nummering" className="w-[33px]"><MdFormatListNumbered /></Tb><Tb label="Nummeringsopties" className="w-4"><MdArrowDropDown /></Tb>
      <Tb label="Inspringing verkleinen" className="w-[33px]"><MdFormatIndentDecrease /></Tb><Tb label="Inspringing vergroten"><MdFormatIndentIncrease /></Tb>
      <Tb label="Opmaak wissen"><MdFormatClear /></Tb>
      <button className="ml-auto flex items-center gap-[9px]"><MdOutlineEdit className="text-[20px]" />Bewerken<MdArrowDropDown className="ml-2 text-[20px]" /></button>
      <Sep className="ml-[23px]" />
      <Tb label="Menu's verbergen" className="w-10"><MdKeyboardArrowUp /></Tb>
    </div>
  );
}

const CM = 41.55;

function HRuler() {
  const quarters = Array.from({ length: 87 }, (_, i) => i - 10);
  return (
    <svg viewBox="0 0 900 20" className="h-[20px] w-[900px] shrink-0" fontSize="12" fill="#5f6368" fontFamily="Roboto, sans-serif">
      {quarters.map((q) => {
        const x = Math.round(104 + (q * CM) / 4);
        if (q % 4 === 0) {
          const n = Math.abs(q / 4);
          return n ? <text key={q} x={x} y="11" textAnchor="middle">{n}</text> : null;
        }
        return <path key={q} d={`M${x + 0.5} ${q % 2 === 0 ? 9 : 13}V17`} stroke="#747775" />;
      })}
      <path d="M104 19.500H790" stroke="#5f6368" />
      <path d="M97 3H111V8H97ZM97 10H111L104 17Z" fill="#4285f4" />
      <path d="M784 9H797L790.500 16Z" fill="#4285f4" />
    </svg>
  );
}

function VRuler() {
  const quarters = Array.from({ length: 82 }, (_, i) => i - 4);
  return (
    <svg viewBox="0 0 18 851" className="h-full max-h-[851px] w-[18px] shrink-0 border-r-2 border-[#747775]" preserveAspectRatio="xMinYMin slice" fontSize="11" fill="#5f6368" fontFamily="Roboto, sans-serif">
      {quarters.map((q) => {
        const y = Math.round(46 + (q * CM) / 4);
        if (q % 4 === 0 && q !== 0) return <text key={q} transform={`translate(10 ${y}) rotate(-90)`} textAnchor="middle">{Math.abs(q / 4)}</text>;
        return <path key={q} d={`M${q % 4 === 2 || q % 4 === -2 ? 8 : 12} ${y + 0.5}H16`} stroke="#747775" />;
      })}
      <g fill="#625df5">{[791, 798, 805].map((y) => <g key={y}><circle cx="7" cy={y} r="2" /><circle cx="14" cy={y} r="2" /></g>)}</g>
    </svg>
  );
}

function SidePanel() {
  return (
    <aside className="flex w-[62px] shrink-0 flex-col items-center pb-[20px]">
      <button aria-label="Agenda" className="h-[22px]">
        <svg viewBox="0 0 22 22" className="size-[22px]"><rect width="22" height="22" rx="2" fill="#4285f4" /><path d="M17 0H20Q22 0 22 2V5H17Z" fill="#1967d2" /><rect x="17" y="5" width="5" height="12" fill="#fbbc04" /><rect x="5" y="17" width="12" height="5" fill="#34a853" /><rect y="17" width="5" height="5" fill="#188038" /><path d="M17 17H22L17 22Z" fill="#ea4335" /><rect x="5" y="5" width="12" height="12" fill="#fff" /><text x="11" y="14.500" fontSize="9" fill="#1a73e8" textAnchor="middle" fontFamily="Roboto, sans-serif">31</text></svg>
      </button>
      <button aria-label="Keep" className="mt-[39px]">
        <svg viewBox="0 0 22 22" className="size-[22px]"><rect width="22" height="22" rx="2" fill="#fbbc04" /><circle cx="11" cy="9.500" r="4.500" fill="#fff" /><path d="M9 12H13V14H9ZM9 15.500H13V17H9Z" fill="#fff" /></svg>
      </button>
      <button aria-label="Taken" className="mt-10">
        <svg viewBox="0 0 22 22" className="size-[22px]"><circle cx="11" cy="12" r="7.500" fill="none" stroke="#2684fc" strokeWidth="3" /><path d="M7.500 11.500L10.500 14.500L19.500 5" fill="none" stroke="#0066da" strokeWidth="3.500" /></svg>
      </button>
      <button aria-label="Contacten" className="mt-[39px]">
        <svg viewBox="0 0 22 22" className="size-[22px]"><circle cx="11" cy="6" r="4" fill="#0057cc" /><rect x="3" y="11" width="16" height="10" rx="5" fill="#6a95f5" /><rect x="6" y="11" width="10" height="10" rx="4" fill="#0057cc" /></svg>
      </button>
      <button aria-label="Maps" className="mt-10">
        <svg viewBox="0 0 22 22" className="size-[22px]"><path d="M11 21Q10 15 6 12Q4 9 5 6L11 8L16 4Q19 8 17 12Q12 16 11 21Z" fill="#34a853" /><path d="M5 6Q6 3 8 2L11 8L6 12.500Q3.500 9 5 6Z" fill="#ea4335" /><path d="M8 2Q13 0 16.500 4L11 8Z" fill="#4285f4" /><path d="M6 12.500L10 8L12 12L9 16Z" fill="#fbbc04" /><circle cx="11" cy="8" r="2.500" fill="#fff" /></svg>
      </button>
      <span className="mt-[37px] h-px w-[22px] bg-[#dadce0]" />
      <button aria-label="Lucidchart" className="mt-[39px]">
        <svg viewBox="0 0 22 22" className="size-[22px]" fill="none" strokeWidth="3.500"><path d="M10 3L18 8V16" stroke="#f57c22" /><path d="M5 6V16L12 20" stroke="#f28b33" /></svg>
      </button>
      <button aria-label="Meer" className="mt-[39px] text-[22px] text-black"><MdAdd /></button>
      <button aria-label="Zijpaneel verbergen" className="mt-auto text-[22px] text-[#444746]"><MdChevronRight /></button>
    </aside>
  );
}

function DocsBody() {
  return (
    <div className="relative flex min-h-0 flex-1 flex-col">
      <div className="flex h-[27px] shrink-0 items-end"><span className="w-[461px] shrink-0" /><HRuler /></div>
      <div className="flex min-h-0 flex-1">
        <VRuler />
        <div className="mr-20 flex min-w-0 flex-1 border-t border-[#c7c7c7]">
          <div className="w-[442px] shrink-0 pl-[28px] pt-[23px]"><button aria-label="Overzicht" className="text-[24px] text-[#444746]"><MdFormatListBulleted /></button></div>
          <div className="relative w-[900px] shrink-0 overflow-hidden border-x border-[#c7c7c7] bg-white pt-[58px]">
            <div className="ml-[105px] w-fit"><ProductForm large /></div>
            <div className="ml-[98px] mt-16 w-fit"><SettingsPage /></div>
          </div>
        </div>
      </div>
      <button aria-label="Assistent" className="absolute bottom-[22px] left-[22px] grid size-[62px] place-items-center rounded-full bg-[#625df5] shadow-lg">
        <svg viewBox="0 0 26 26" className="size-[26px]" stroke="#fff" strokeWidth="2.500">
          {Array.from({ length: 12 }, (_, i) => <path key={i} d="M13 0V9" transform={`rotate(${i * 30} 13 13)`} />)}
          <circle cx="13" cy="13" r="4.500" fill="none" strokeWidth="1.500" />
        </svg>
      </button>
      <span className="absolute bottom-[64px] right-[66px] h-[201px] w-2 rounded-full bg-[#dadce0]" />
    </div>
  );
}

function Browser() {
  return (
    <div className="min-w-0 bg-white">
      <div className="flex h-[90%] flex-col overflow-hidden bg-[#f9fbfd] font-[Roboto,sans-serif]">
        <BrowserChrome />
        <DocsHeader />
        <div className="relative flex min-h-0 flex-1 flex-col">
          <DocsToolbar />
          <DocsBody />
          <div className="absolute bottom-0 right-0 top-[14px] flex"><SidePanel /></div>
        </div>
      </div>
    </div>
  );
}

export default function App() {
  return (
    <main className="grid h-screen grid-cols-2 overflow-hidden">
      <LeftDesktop />
      <Browser />
    </main>
  );
}
